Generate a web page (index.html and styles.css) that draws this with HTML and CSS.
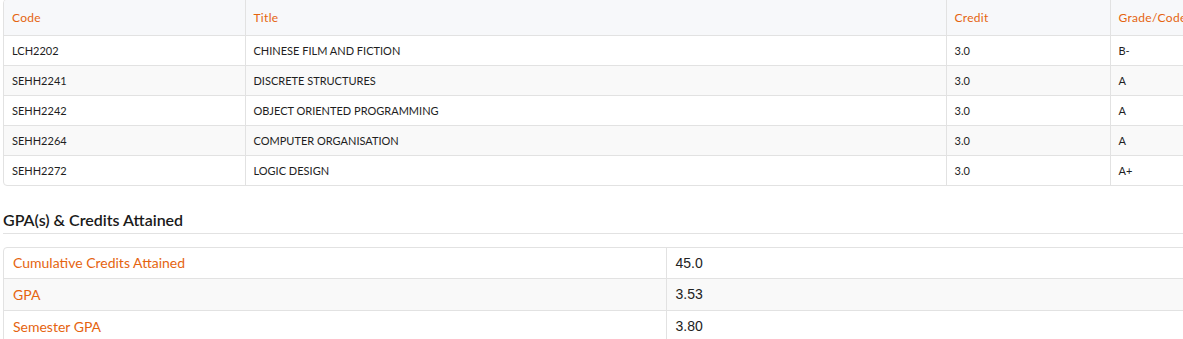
FILE: index.html
```html
<!DOCTYPE html>
<html>
<head>
<meta charset="utf-8">
<link rel="stylesheet" href="styles.css">
</head>
<body>
<div class="page">
  <div class="box courses">
    <table class="grid">
      <colgroup>
        <col class="c-code"><col class="c-title"><col class="c-credit"><col class="c-grade">
      </colgroup>
      <thead>
        <tr><th>Code</th><th>Title</th><th>Credit</th><th>Grade/Code</th></tr>
      </thead>
      <tbody>
        <tr><td>LCH2202</td><td>CHINESE FILM AND FICTION</td><td>3.0</td><td>B-</td></tr>
        <tr><td>SEHH2241</td><td>DISCRETE STRUCTURES</td><td>3.0</td><td>A</td></tr>
        <tr><td>SEHH2242</td><td>OBJECT ORIENTED PROGRAMMING</td><td>3.0</td><td>A</td></tr>
        <tr><td>SEHH2264</td><td>COMPUTER ORGANISATION</td><td>3.0</td><td>A</td></tr>
        <tr><td>SEHH2272</td><td>LOGIC DESIGN</td><td>3.0</td><td>A+</td></tr>
      </tbody>
    </table>
  </div>

  <h2 class="section-title">GPA(s) &amp; Credits Attained</h2>

  <div class="box gpa">
    <table class="kv">
      <colgroup><col class="k-label"><col class="k-value"></colgroup>
      <tbody>
        <tr><th>Cumulative Credits Attained</th><td>45.0</td></tr>
        <tr><th>GPA</th><td>3.53</td></tr>
        <tr><th>Semester GPA</th><td>3.80</td></tr>
      </tbody>
    </table>
  </div>
</div>
</body>
</html>
```

FILE: styles.css
```css
html, body {
  margin: 0;
  padding: 0;
  background: #ffffff;
  overflow: hidden;
}

body {
  font-family: Lato, "Liberation Sans", sans-serif;
  color: #222;
}

.page {
  width: 1300px;
  padding-left: 3px;
  margin-top: -1px;
}

.box {
  border: 1px solid #e2e2e2;
  border-radius: 4px;
  overflow: hidden;
}

table {
  border-collapse: collapse;
  width: 100%;
  table-layout: fixed;
}

.c-code { width: 241px; }
.c-title { width: 701px; }
.c-credit { width: 164px; }
.c-grade { width: auto; }

.grid th {
  background: #f7f8fa;
  color: #e5640f;
  font-weight: normal;
  font-size: 12px;
  letter-spacing: 0.3px;
  text-align: left;
  height: 35px;
  padding: 0 8px;
  border-bottom: 1px solid #e2e2e2;
  border-left: 1px solid #e2e2e2;
  box-sizing: border-box;
}

.grid td {
  font-size: 11px;
  height: 29px;
  padding: 0 8px;
  border-top: 1px solid #e2e2e2;
  border-left: 1px solid #e2e2e2;
  color: #1e1e1e;
}

.grid th:first-child,
.grid td:first-child { border-left: none; }

.grid thead + tbody tr:first-child td { border-top: none; }

.grid tbody tr:nth-child(even) td { background: #f9f9f9; }

.section-title {
  font-size: 16px;
  font-weight: 600;
  color: #1a1a1a;
  margin: 24px 0 13px;
  padding-bottom: 3px;
  line-height: 20px;
  border-bottom: 1px solid #e2e2e2;
}

.k-label { width: 662px; }

.kv th {
  color: #e5640f;
  font-weight: normal;
  font-size: 14px;
  text-align: left;
  padding: 0 9px;
  height: 31px;
  border-right: 1px solid #e2e2e2;
  border-top: 1px solid #e2e2e2;
}

.kv td {
  font-family: "Liberation Sans", Arial, sans-serif;
  font-size: 14px;
  color: #222;
  padding: 0 9px;
  height: 31px;
  border-top: 1px solid #e2e2e2;
}

.kv tr:first-child th,
.kv tr:first-child td { border-top: none; height: 30px; }

.kv tr:nth-child(even) th,
.kv tr:nth-child(even) td { background: #f9f9f9; }
```
